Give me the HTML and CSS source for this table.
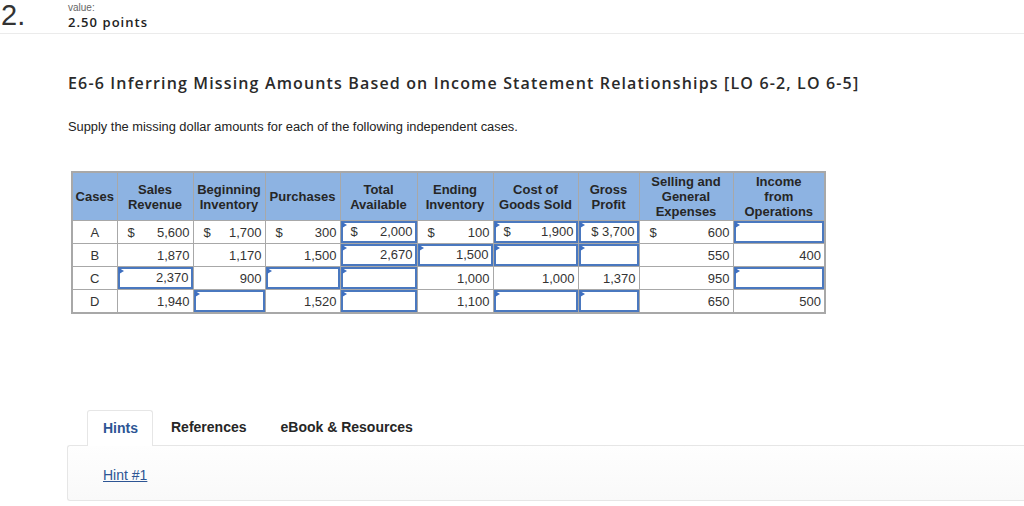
FILE: index.html
```html
<!DOCTYPE html>
<html>
<head>
<meta charset="utf-8">
<link rel="stylesheet" href="styles.css">
</head>
<body>
<div class="top">
  <div class="qnum">2.</div>
  <div class="value">
    <div class="value-label">value:</div>
    <div class="points">2.50 points</div>
  </div>
</div>
<div class="content">
  <h1 class="title">E6-6 Inferring Missing Amounts Based on Income Statement Relationships [LO 6-2, LO 6-5]</h1>
  <p class="instr">Supply the missing dollar amounts for each of the following independent cases.</p>
  <table class="grid">
    <colgroup>
      <col class="c1"><col class="c2"><col class="c3"><col class="c4"><col class="c5">
      <col class="c6"><col class="c7"><col class="c8"><col class="c9"><col class="c10">
    </colgroup>
    <thead>
      <tr>
        <th>Cases</th><th>Sales<br>Revenue</th><th>Beginning<br>Inventory</th><th>Purchases</th><th>Total<br>Available</th>
        <th>Ending<br>Inventory</th><th>Cost of<br>Goods Sold</th><th>Gross<br>Profit</th><th>Selling and<br>General<br>Expenses</th><th>Income<br>from<br>Operations</th>
      </tr>
    </thead>
    <tbody>
      <tr>
        <td class="case">A</td>
        <td><span class="dol">$</span>5,600</td>
        <td><span class="dol">$</span>1,700</td>
        <td><span class="dol">$</span>300</td>
        <td class="inp"><div class="box"><span class="dol">$</span>2,000</div></td>
        <td><span class="dol">$</span>100</td>
        <td class="inp"><div class="box"><span class="dol">$</span>1,900</div></td>
        <td class="inp"><div class="box">$ 3,700</div></td>
        <td><span class="dol">$</span>600</td>
        <td class="inp"><div class="box"></div></td>
      </tr>
      <tr>
        <td class="case">B</td>
        <td>1,870</td>
        <td>1,170</td>
        <td>1,500</td>
        <td class="inp"><div class="box">2,670</div></td>
        <td class="inp"><div class="box">1,500</div></td>
        <td class="inp"><div class="box"></div></td>
        <td class="inp"><div class="box"></div></td>
        <td>550</td>
        <td>400</td>
      </tr>
      <tr>
        <td class="case">C</td>
        <td class="inp"><div class="box">2,370</div></td>
        <td>900</td>
        <td class="inp"><div class="box"></div></td>
        <td class="inp"><div class="box"></div></td>
        <td>1,000</td>
        <td>1,000</td>
        <td>1,370</td>
        <td>950</td>
        <td class="inp"><div class="box"></div></td>
      </tr>
      <tr>
        <td class="case">D</td>
        <td>1,940</td>
        <td class="inp"><div class="box"></div></td>
        <td>1,520</td>
        <td class="inp"><div class="box"></div></td>
        <td>1,100</td>
        <td class="inp"><div class="box"></div></td>
        <td class="inp"><div class="box"></div></td>
        <td>650</td>
        <td>500</td>
      </tr>
    </tbody>
  </table>
</div>
<div class="tabs-area">
  <div class="tabs">
    <div class="tab active">Hints</div>
    <div class="tab">References</div>
    <div class="tab">eBook &amp; Resources</div>
  </div>
  <div class="panel">
    <a class="hint" href="#">Hint #1</a>
  </div>
</div>
</body>
</html>
```

FILE: styles.css
```css
html, body {
  margin: 0;
  padding: 0;
  background: #ffffff;
  color: #333333;
  font-family: "Liberation Sans", Arial, sans-serif;
}

.top {
  display: flex;
  height: 33px;
  border-bottom: 1px solid #ebebeb;
}

.qnum {
  width: 68px;
  font-size: 29px;
  line-height: 20px;
  padding-top: 5px;
  color: #333;
  padding-left: 1px;
  box-sizing: border-box;
}

.value {
  display: flex;
  flex-direction: column;
}

.value-label {
  font-size: 10px;
  line-height: 12px;
  color: #666;
  margin-top: 2px;
}

.points {
  font-family: "Open Sans", "Liberation Sans", sans-serif;
  font-weight: 600;
  font-size: 13px;
  line-height: 16px;
  letter-spacing: 1.05px;
  color: #222;
}

.content {
  padding-left: 68px;
}

.title {
  margin: 39px 0 0 0;
  font-family: "Open Sans", "Liberation Sans", sans-serif;
  font-weight: 600;
  font-size: 16px;
  line-height: 20px;
  letter-spacing: 1.15px;
  color: #2a2a2a;
}

.instr {
  margin: 26px 0 0 0;
  font-size: 12.85px;
  line-height: 15px;
  color: #222;
}

.grid {
  margin: 37px 0 0 3px;
  border-collapse: collapse;
  table-layout: fixed;
  width: 754px;
  font-size: 13px;
  border: 2px solid #a8a8a8;
}

.c1 { width: 45px; }
.c2 { width: 76px; }
.c3 { width: 72px; }
.c4 { width: 75px; }
.c5 { width: 77px; }
.c6 { width: 76px; }
.c7 { width: 85px; }
.c8 { width: 61px; }
.c9 { width: 94px; }
.c10 { width: 92px; }

.grid th {
  background: #8db3e2;
  color: #262626;
  font-weight: bold;
  font-size: 13px;
  line-height: 15px;
  height: 47px;
  padding: 0 1px;
  border: 1px solid #a8a8a8;
  text-align: center;
  vertical-align: middle;
}

.grid td {
  height: 22px;
  padding: 0 3px 0 10px;
  border: 1px solid #a8a8a8;
  text-align: right;
  color: #333;
  vertical-align: middle;
  line-height: 15px;
}

.grid td.case {
  text-align: center;
  padding: 0;
}

.dol {
  float: left;
}

.grid td.inp {
  padding: 0;
}

.box {
  position: relative;
  height: 18px;
  line-height: 18px;
  border: 2px solid #4a78bf;
  padding: 0 2px 0 8px;
  text-align: right;
}

.box::before {
  content: "";
  position: absolute;
  left: -1px;
  top: -1px;
  border-top: 3px solid transparent;
  border-bottom: 3px solid transparent;
  border-left: 5px solid #3e6fc0;
}

.tabs-area {
  margin-top: 96px;
  padding-left: 67px;
}

.tabs {
  display: flex;
  padding-left: 20px;
  height: 35px;
  position: relative;
  z-index: 1;
}

.tab {
  font-size: 14px;
  font-weight: bold;
  color: #262626;
  line-height: 35px;
  padding: 0 16px 0 18px;
}

.tab.active {
  color: #2d5594;
  background: #fff;
  border: 1px solid #e6e6e6;
  border-bottom: none;
  border-radius: 3px 3px 0 0;
  box-sizing: border-box;
  height: 36px;
  line-height: 35px;
  padding: 0 14px 0 15px;
}

.panel {
  border: 1px solid #e6e6e6;
  border-right: none;
  border-radius: 3px 0 0 3px;
  height: 56px;
  box-sizing: border-box;
  background: linear-gradient(#fefefe, #f9f9f9);
  padding: 20px 0 0 35px;
}

.hint {
  font-size: 14px;
  line-height: 17px;
  color: #2d5594;
  text-decoration: underline;
}
```
